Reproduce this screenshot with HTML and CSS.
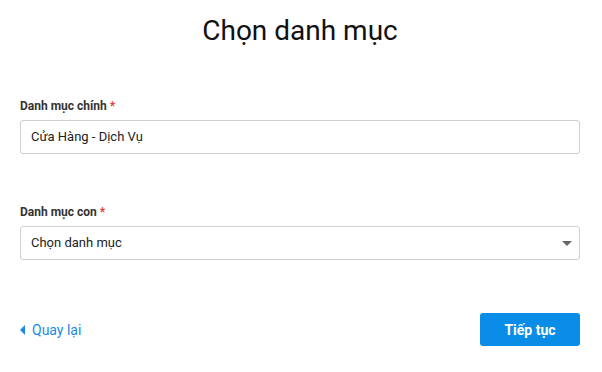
FILE: index.html
```html
<!DOCTYPE html>
<html lang="vi">
<head>
<meta charset="utf-8">
<link rel="stylesheet" href="styles.css">
</head>
<body>
<div class="page">
  <h1 class="title">Chọn danh mục</h1>
  <div class="field field-first">
    <label class="label">Danh mục chính <span class="req">*</span></label>
    <div class="input">Cửa Hàng - Dịch Vụ</div>
  </div>
  <div class="field field-second">
    <label class="label">Danh mục con <span class="req">*</span></label>
    <div class="input select">
      <span>Chọn danh mục</span>
      <span class="caret"></span>
    </div>
  </div>
  <div class="footer">
    <a class="back"><span class="back-caret"></span>Quay lại</a>
    <button class="next">Tiếp tục</button>
  </div>
</div>
</body>
</html>
```

FILE: styles.css
```css
* { box-sizing: border-box; }
html, body { margin: 0; padding: 0; background: #fff; }
body { font-family: Roboto, "Noto Sans", Arial, sans-serif; color: #222; }
.page { width: 602px; height: 372px; padding: 0 22px 0 20px; display: flex; flex-direction: column; }
.title { margin: 14px 0 0; font-size: 28px; font-weight: 400; text-align: center; line-height: 34px; color: #111; }
.field { display: flex; flex-direction: column; }
.field-first { margin-top: 50px; }
.field-second { margin-top: 50px; }
.label { font-size: 12px; font-weight: 700; color: #333; line-height: 16px; margin-bottom: 6px; }
.req { color: #e53935; }
.input { height: 34px; border: 1px solid #cfcfcf; border-radius: 3px; padding: 0 10px; font-size: 13px; line-height: 32px; color: #222; display: flex; align-items: center; justify-content: space-between; }
.caret { width: 0; height: 0; border-left: 5px solid transparent; border-right: 5px solid transparent; border-top: 5px solid #666; margin-right: -3px; }
.footer { margin-top: 53px; display: flex; justify-content: space-between; align-items: center; }
.back { color: #1a8ae4; font-size: 14px; display: flex; align-items: center; cursor: pointer; }
.back-caret { width: 0; height: 0; border-top: 5px solid transparent; border-bottom: 5px solid transparent; border-right: 5px solid #1a8ae4; margin-right: 7px; }
.next { width: 100px; height: 33px; background: #0a8de6; border: none; border-radius: 3px; color: #fff; font-family: Roboto, "Noto Sans", Arial, sans-serif; font-size: 14px; font-weight: 700; padding: 0; }
```
